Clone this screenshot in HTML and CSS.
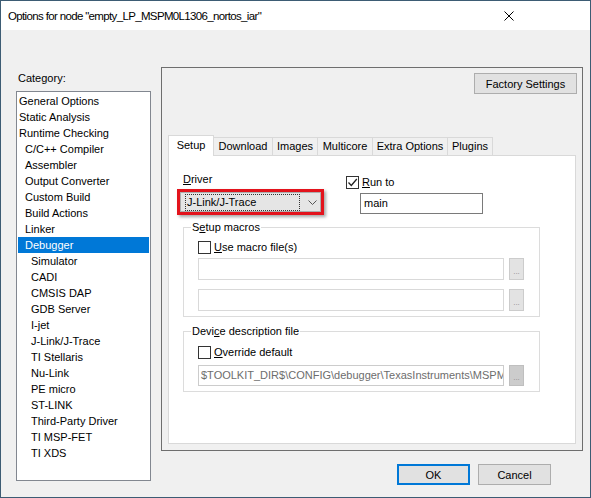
FILE: index.html
```html
<!DOCTYPE html>
<html>
<head>
<meta charset="utf-8">
<title>Options</title>
<link rel="stylesheet" href="styles.css">
</head>
<body>
<div class="window">
  <div class="titlebar">
    <span class="title">Options for node "empty_LP_MSPM0L1306_nortos_iar"</span>
    <svg class="close" width="10" height="10" viewBox="0 0 10 10"><path d="M0.5 0.5 L9.5 9.5 M9.5 0.5 L0.5 9.5" stroke="#000" stroke-width="1" fill="none"/></svg>
  </div>
  <div class="main">
    <div class="category">
      <div class="cat-label">Category:</div>
      <ul class="list">
        <li>General Options</li>
        <li>Static Analysis</li>
        <li>Runtime Checking</li>
        <li class="l1">C/C++ Compiler</li>
        <li class="l1">Assembler</li>
        <li class="l1">Output Converter</li>
        <li class="l1">Custom Build</li>
        <li class="l1">Build Actions</li>
        <li class="l1">Linker</li>
        <li class="l1 sel">Debugger</li>
        <li class="l2">Simulator</li>
        <li class="l2">CADI</li>
        <li class="l2">CMSIS DAP</li>
        <li class="l2">GDB Server</li>
        <li class="l2">I-jet</li>
        <li class="l2">J-Link/J-Trace</li>
        <li class="l2">TI Stellaris</li>
        <li class="l2">Nu-Link</li>
        <li class="l2">PE micro</li>
        <li class="l2">ST-LINK</li>
        <li class="l2">Third-Party Driver</li>
        <li class="l2">TI MSP-FET</li>
        <li class="l2">TI XDS</li>
      </ul>
    </div>
    <div class="right">
      <div class="panel">
        <div class="panel-top"><button class="btn factory">Factory Settings</button></div>
        <div class="tabs">
          <div class="tabstrip">
            <div class="tab active t-setup">Setup</div>
            <div class="tab t-download">Download</div>
            <div class="tab t-images">Images</div>
            <div class="tab t-multicore">Multicore</div>
            <div class="tab t-extra">Extra Options</div>
            <div class="tab t-plugins">Plugins</div>
          </div>
          <div class="page">
            <div class="row1">
              <div class="driver-col">
                <div class="label"><u>D</u>river</div>
                <div class="redbox">
                  <div class="combo">
                    <span class="combo-text">J-Link/J-Trace</span>
                    <svg class="chevron" width="9" height="5" viewBox="0 0 9 5"><polyline points="0.5,0.5 4.5,4.5 8.5,0.5" fill="none" stroke="#555" stroke-width="1"/></svg>
                  </div>
                </div>
              </div>
              <div class="runto-col">
                <div class="check-row">
                  <span class="checkbox checked"><svg width="11" height="11" viewBox="0 0 11 11"><polyline points="1.5,5.5 4.3,8.5 9.8,2" fill="none" stroke="#222" stroke-width="1.3"/></svg></span>
                  <span class="check-label"><u>R</u>un to</span>
                </div>
                <div class="textbox main-box">main</div>
              </div>
            </div>
            <fieldset class="group macros">
              <legend>S<u>e</u>tup macros</legend>
              <div class="check-row">
                <span class="checkbox"></span>
                <span class="check-label"><u>U</u>se macro file(s)</span>
              </div>
              <div class="file-row first">
                <div class="textbox file-box"></div>
                <div class="browse">...</div>
              </div>
              <div class="file-row second">
                <div class="textbox file-box"></div>
                <div class="browse">...</div>
              </div>
            </fieldset>
            <fieldset class="group device">
              <legend>Devi<u>c</u>e description file</legend>
              <div class="check-row">
                <span class="checkbox"></span>
                <span class="check-label"><u>O</u>verride default</span>
              </div>
              <div class="file-row first">
                <div class="textbox file-box disabled">$TOOLKIT_DIR$\CONFIG\debugger\TexasInstruments\MSPM</div>
                <div class="browse dark">...</div>
              </div>
            </fieldset>
          </div>
        </div>
      </div>
      <div class="footer">
        <button class="btn ok">OK</button>
        <button class="btn cancel">Cancel</button>
      </div>
    </div>
  </div>
</div>
</body>
</html>
```

FILE: styles.css
```css
* { box-sizing: border-box; }
html, body { margin: 0; padding: 0; }
body {
  width: 591px;
  height: 498px;
  overflow: hidden;
  background: #f0f0f0;
  font-family: "Liberation Sans", Arial, sans-serif;
  font-size: 11px;
  color: #000;
}
.window {
  width: 591px;
  height: 498px;
  border: 1px solid #3d5c74;
  background: #f0f0f0;
  display: flex;
  flex-direction: column;
}
.titlebar {
  height: 29px;
  flex: none;
  background: #fff;
  display: flex;
  align-items: center;
  padding-left: 7px;
}
.title {
  flex: 1;
  font-family: "Liberation Sans", Arial, sans-serif;
  font-size: 11.5px;
  letter-spacing: -0.65px;
  white-space: nowrap;
}
.close { margin-right: 76px; flex: none; }

.main {
  display: flex;
  padding: 37px 0 0 15px;
}
.category { width: 135px; padding-top: 3px; flex: none; }
.cat-label { height: 16px; line-height: 16px; margin-bottom: 5px; padding-left: 2px; }
.list {
  list-style: none;
  margin: 0;
  padding: 1px;
  height: 390px;
  border: 1px solid #828790;
  background: #fff;
}
.list li { height: 16px; line-height: 16px; padding-left: 1px; white-space: nowrap; }
.list li.l1 { padding-left: 7px; }
.list li.l2 { padding-left: 13px; }
.list li.sel { background: #0078d7; color: #fff; }

.right { margin-left: 10px; width: 422px; flex: none; display: flex; flex-direction: column; }
.panel {
  height: 384px;
  border: 1px solid #6e6e6e;
  display: flex;
  flex-direction: column;
}
.panel-top { display: flex; justify-content: flex-end; padding: 5px 5px 0 0; }
.btn {
  height: 21px;
  padding: 0;
  background: #e1e1e1;
  border: 1px solid #adadad;
  font-family: "Liberation Sans", Arial, sans-serif;
  font-size: 11px;
  color: #000;
}
.factory { width: 103px; }

.tabs { flex: 1; display: flex; flex-direction: column; padding: 41px 6px 6px 6px; }
.tabstrip { height: 20px; display: flex; align-items: flex-end; flex: none; }
.tab {
  height: 18px;
  line-height: 17px;
  border: 1px solid #d9d9d9;
  border-bottom: none;
  margin-right: -1px;
  background: #f0f0f0;
  text-align: center;
  white-space: nowrap;
}
.tab.active {
  height: 21px;
  line-height: 18px;
  margin-bottom: -1px;
  background: #fff;
  position: relative;
  z-index: 1;
}
.t-setup { width: 46px; }
.t-download { width: 60px; }
.t-images { width: 46px; }
.t-multicore { width: 56px; }
.t-extra { width: 76px; }
.t-plugins { width: 46px; }

.page {
  flex: 1;
  border: 1px solid #d9d9d9;
  background: #fff;
  padding: 15px 0 0 14px;
}
.row1 { display: flex; }
.driver-col { width: 163px; }
.label { height: 16px; line-height: 16px; }
.redbox {
  margin: 2px 0 0 -6px;
  width: 147px;
  height: 26px;
  border: 3px solid #e3131c;
  box-shadow: 2px 2px 3px rgba(0,0,0,0.35);
}
.combo {
  height: 100%;
  background: #e5e5e5;
  border: 1px solid #adadad;
  display: flex;
  align-items: center;
  padding-left: 4px;
}
.combo-text {
  width: 115px;
  height: 17px;
  line-height: 15px;
  border: 1px dotted #333;
  padding-left: 1px;
  white-space: nowrap;
}
.chevron { margin-left: 8px; }

.runto-col { padding-top: 3px; }
.check-row { display: flex; align-items: center; height: 13px; line-height: 13px; }
.checkbox {
  width: 13px;
  height: 13px;
  border: 1px solid #333;
  background: #fff;
  flex: none;
  display: flex;
  align-items: center;
  justify-content: center;
}
.check-label { margin-left: 3px; white-space: nowrap; }
.runto-col .check-row { margin-top: 2px; }
.textbox {
  border: 1px solid #7a7a7a;
  background: #fff;
  padding-left: 3px;
  white-space: nowrap;
  overflow: hidden;
}
.main-box { width: 123px; height: 21px; line-height: 19px; margin: 4px 0 0 14px; }

.group {
  margin: 4px 0 0 0;
  width: 357px;
  border: 1px solid #dcdcdc;
  padding: 0 0 5px 14px;
}
.group legend {
  padding: 0 1px;
  margin-left: -7px;
  height: 16px;
  line-height: 16px;
}
.group .check-row { margin-top: 6px; }
.file-row { display: flex; margin-top: 4px; }
.file-row.second { margin-top: 9px; }
.file-box { width: 306px; height: 22px; line-height: 20px; border-color: #d9d9d9; }
.file-box.disabled { height: 21px; line-height: 19px; border-color: #cccccc; color: #6d6d6d; background: #fff; padding-left: 2px; }
.browse {
  width: 15px;
  margin-left: 5px;
  background: #e3e3e3;
  border: 1px solid #cccccc;
  color: #8c8c8c;
  font-size: 8px;
  text-align: center;
  display: flex;
  align-items: flex-end;
  justify-content: center;
  padding-bottom: 3px;
  line-height: 8px;
}
.browse.dark { background: #cccccc; border-color: #bfbfbf; }
.device { margin-top: 6px; }
.device .check-row { margin-top: 7px; }
.device .file-row { margin-top: 6px; }

.footer { display: flex; justify-content: flex-end; gap: 8px; padding-right: 32px; margin-top: 13px; }
.ok, .cancel { width: 73px; }
.ok { border: 2px solid #0078d7; }
```
